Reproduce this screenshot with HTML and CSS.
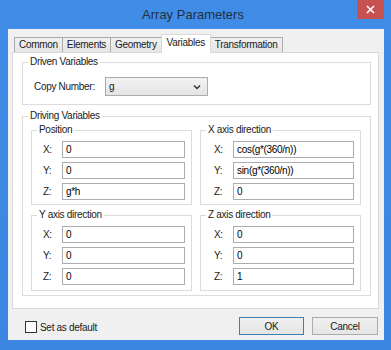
FILE: index.html
```html
<!DOCTYPE html>
<html lang="en">

<head>
    <meta charset="UTF-8">
    <meta name="viewport" content="width=device-width, initial-scale=1.0">
    <title>Array Parameters</title>
    <link rel="stylesheet" href="styles.css">
</head>

<body>

    <div class="window">
        <div class="titlebar">
            <span></span>
            <span class="title">Array Parameters</span>
            <span class="close">
                <svg width="9" height="9" viewBox="0 0 9 9"><path d="M1 1 L8 8 M8 1 L1 8" stroke="#fff" stroke-width="1.6"/></svg>
            </span>
        </div>

        <div class="client">
            <div class="tabs">
                <span class="tab">Common</span>
                <span class="tab">Elements</span>
                <span class="tab">Geometry</span>
                <span class="tab active">Variables</span>
                <span class="tab">Transformation</span>
            </div>

            <div class="panel">
                <fieldset class="group driven">
                    <legend>Driven Variables</legend>
                    <div class="copy-row">
                        <span class="copy-label">Copy Number:</span>
                        <div class="select">
                            <span>g</span>
                            <svg width="8" height="6" viewBox="0 0 8 6"><path d="M1 1.5 L4 4.5 L7 1.5" fill="none" stroke="#333" stroke-width="1.5"/></svg>
                        </div>
                    </div>
                </fieldset>

                <fieldset class="group driving">
                    <legend>Driving Variables</legend>
                    <div class="grid">
                        <fieldset class="group sub">
                            <legend>Position</legend>
                            <div class="fields">
                                <div class="field"><span>X:</span><input type="text" value="0"></div>
                                <div class="field"><span>Y:</span><input type="text" value="0"></div>
                                <div class="field"><span>Z:</span><input type="text" value="g*h"></div>
                            </div>
                        </fieldset>
                        <fieldset class="group sub right">
                            <legend>X axis direction</legend>
                            <div class="fields">
                                <div class="field"><span>X:</span><input type="text" value="cos(g*(360/n))"></div>
                                <div class="field"><span>Y:</span><input type="text" value="sin(g*(360/n))"></div>
                                <div class="field"><span>Z:</span><input type="text" value="0"></div>
                            </div>
                        </fieldset>
                        <fieldset class="group sub">
                            <legend>Y axis direction</legend>
                            <div class="fields">
                                <div class="field"><span>X:</span><input type="text" value="0"></div>
                                <div class="field"><span>Y:</span><input type="text" value="0"></div>
                                <div class="field"><span>Z:</span><input type="text" value="0"></div>
                            </div>
                        </fieldset>
                        <fieldset class="group sub right">
                            <legend>Z axis direction</legend>
                            <div class="fields">
                                <div class="field"><span>X:</span><input type="text" value="0"></div>
                                <div class="field"><span>Y:</span><input type="text" value="0"></div>
                                <div class="field"><span>Z:</span><input type="text" value="1"></div>
                            </div>
                        </fieldset>
                    </div>
                </fieldset>
            </div>

            <div class="footer">
                <label class="check"><span class="box"></span>Set as default</label>
                <div class="buttons">
                    <button class="default">OK</button>
                    <button>Cancel</button>
                </div>
            </div>
        </div>
    </div>

</body>

</html>
```

FILE: styles.css
```css
* {
    box-sizing: border-box;
}

body {
    margin: 0;
    font-family: "Liberation Sans", Arial, sans-serif;
    font-size: 10px;
    letter-spacing: -0.3px;
    color: #1a1a1a;
}

.window {
    width: 391px;
    height: 350px;
    display: flex;
    flex-direction: column;
    padding: 0 7px 10px 8px;
    background: linear-gradient(#3f8de6, #3a86e0);
}

.titlebar {
    height: 29px;
    display: grid;
    grid-template-columns: 27px 1fr 27px;
    align-items: start;
}

.title {
    text-align: center;
    font-size: 13px;
    letter-spacing: 0;
    color: #22303f;
    padding-top: 7px;
    margin-right: 6px;
}

.close {
    height: 19px;
    background: #c75050;
    display: flex;
    align-items: center;
    justify-content: center;
}

.client {
    flex: 1;
    display: flex;
    flex-direction: column;
    background: #f0f0f0;
    padding: 5px 5px 0 4px;
}

.tabs {
    height: 18px;
    display: flex;
    align-items: flex-end;
    padding-left: 2px;
}

.tab {
    height: 15px;
    padding: 0 4px;
    line-height: 14px;
    border: 1px solid #acacac;
    border-bottom: none;
    border-right: none;
    background: linear-gradient(#f0f0f0, #e5e5e5);
}

.tab:nth-child(5) {
    border-right: 1px solid #acacac;
}

.tab.active {
    height: 19px;
    margin-bottom: -1px;
    position: relative;
    z-index: 1;
    background: #fff;
    border-color: #d9d9d9;
    border-right: 1px solid #d9d9d9;
    padding: 0 5px;
    line-height: 15px;
}

.tab.active + .tab {
    border-left: none;
}

.panel {
    flex: 1;
    background: #fff;
    border: 1px solid #d9d9d9;
    padding: 3px 7px 0 9px;
}

.group {
    margin: 0;
    min-width: 0;
    padding: 0;
    border: 1px solid #dcdcdc;
}

.group legend {
    padding: 0 2px;
    margin-left: 5px;
    line-height: 12px;
}

.driven {
    padding: 9px 0 8px 0;
}

.copy-row {
    display: flex;
    align-items: center;
    padding-left: 11px;
}

.copy-label {
    width: 71px;
}

.select {
    width: 103px;
    height: 19px;
    display: flex;
    align-items: center;
    justify-content: space-between;
    padding: 0 6px 0 3px;
    border: 1px solid #acacac;
    background: linear-gradient(#f2f2f2, #e4e4e4);
}

.driving {
    margin-top: 5px;
    padding: 2px 0 4px 0;
}

.grid {
    display: grid;
    grid-template-columns: 1fr 1fr;
    column-gap: 8px;
    row-gap: 4px;
    padding: 0 9px 0 8px;
}

.sub {
    padding: 5px 0 4px 0;
}

.grid .sub:nth-child(n+3) {
    padding-bottom: 5px;
}

.fields {
    display: flex;
    flex-direction: column;
    gap: 4px;
    padding: 0 6px 0 11px;
}

.sub.right .fields {
    padding-left: 13px;
}

.field {
    display: grid;
    grid-template-columns: 19px 1fr;
    align-items: center;
}

.field input {
    height: 17px;
    width: 100%;
    border: 1px solid #abadb3;
    padding: 0 3px;
    font-family: inherit;
    font-size: 10px;
    letter-spacing: -0.3px;
    color: #000;
    background: #fff;
}

.footer {
    height: 31px;
    display: flex;
    justify-content: space-between;
    align-items: flex-start;
    padding: 8px 1px 0 13px;
}

.check {
    display: flex;
    align-items: center;
    gap: 3px;
    margin-top: 4px;
}

.box {
    width: 12px;
    height: 12px;
    border: 1px solid #333;
    background: #fff;
}

.buttons {
    display: flex;
    gap: 8px;
}

button {
    width: 66px;
    height: 18px;
    padding: 0;
    font-family: inherit;
    font-size: 10px;
    letter-spacing: -0.3px;
    color: #1a1a1a;
    border: 1px solid #acacac;
    background: linear-gradient(#f0f0f0, #e5e5e5);
}

button.default {
    width: 65px;
    border-color: #3c7fb1;
}
```
